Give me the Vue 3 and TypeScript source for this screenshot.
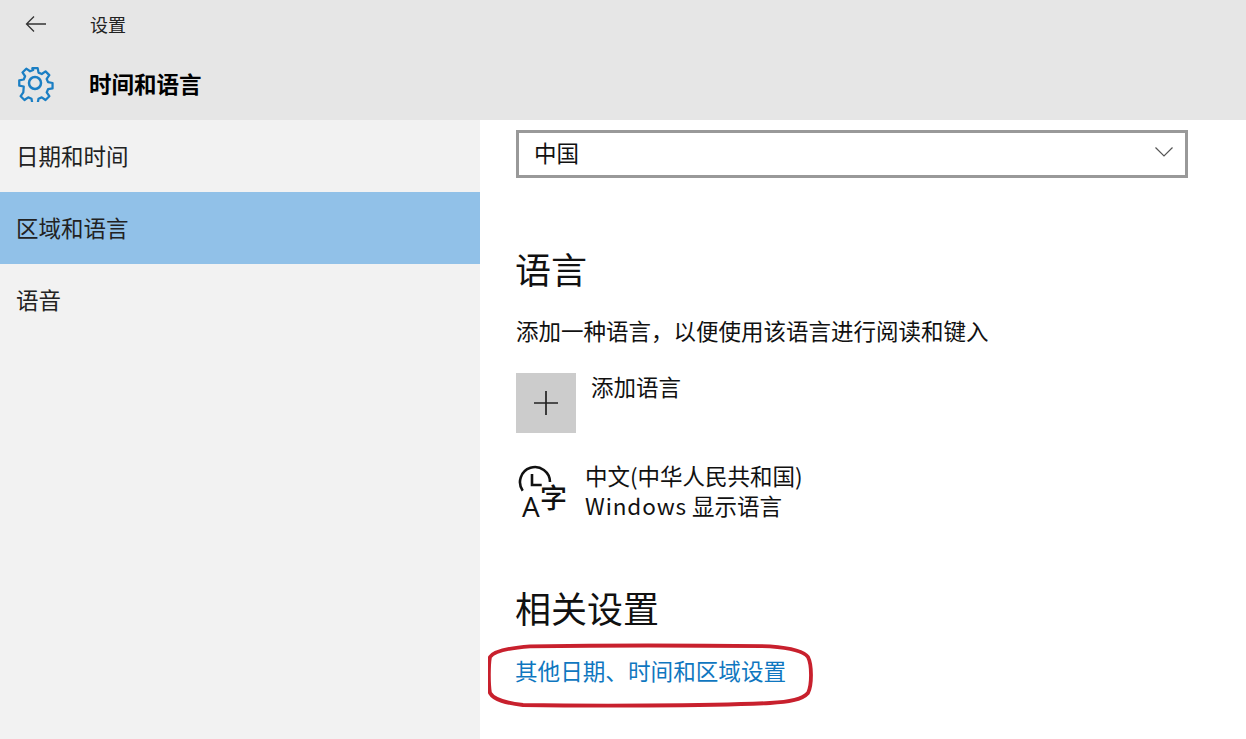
<script setup lang="ts">
const navItems: { label: string; active?: boolean }[] = [
  { label: '日期和时间' },
  { label: '区域和语言', active: true },
  { label: '语音' },
]
</script>

<template>
  <div class="app">
    <header class="header">
      <div class="top">
        <svg class="back" width="24" height="20" viewBox="0 0 24 20" fill="none" stroke="#333" stroke-width="1.3">
          <path d="M2.5 10H22M10 2.5L2.5 10L10 17.5" />
        </svg>
        <span class="top-title">设置</span>
      </div>
      <div class="title-row">
        <svg class="gear" width="38" height="38" viewBox="0 0 38 38" fill="none" stroke="#1b7fc4" stroke-width="2.5" stroke-linejoin="round">
          <path d="M16 2.5h6l.9 5 3.6 1.5 4.2-2.9 4.2 4.2-2.9 4.200 1.500 3.600 5 .9v6l-5 .9-1.500 3.600 2.900 4.200-4.200 4.200-4.200-2.900-3.600 1.500-.9 5h-6l-.9-5-3.600-1.500-4.200 2.900-4.200-4.200 2.900-4.200L6.500 22.900l-5-.9v-6l5-.9L8 11.500 5.100 7.300 9.300 3.100l4.200 2.900L17 4.500z" transform="translate(1.900 1.900) scale(.9)" />
          <circle cx="19" cy="19" r="6" />
        </svg>
        <h1 class="title">时间和语言</h1>
      </div>
    </header>
    <div class="body">
      <nav class="sidebar">
        <div v-for="item in navItems" :key="item.label" class="nav-item" :class="{ active: item.active }">{{ item.label }}</div>
      </nav>
      <main class="content">
        <div class="select">
          <span>中国</span>
          <svg width="20" height="12" viewBox="0 0 20 12" fill="none" stroke="#555" stroke-width="1.2">
            <path d="M1.500 1.500L10 10L18.500 1.500" />
          </svg>
        </div>
        <h2 class="section first">语言</h2>
        <p class="desc">添加一种语言，以便使用该语言进行阅读和键入</p>
        <div class="add-row">
          <div class="add-btn">
            <svg width="26" height="26" viewBox="0 0 26 26" stroke="#222" stroke-width="1.7">
              <path d="M13 1V25M1 13H25" />
            </svg>
          </div>
          <span class="add-label">添加语言</span>
        </div>
        <div class="lang-row">
          <svg class="lang-icon" width="52" height="52" viewBox="0 0 52 52" fill="none" stroke="#111" stroke-width="2.600">
            <path d="M6.700 25.700A15 15 0 1 1 34 17" />
            <path d="M16 9V20H25.700" />
          </svg>
          <span class="icon-a">A</span>
          <span class="icon-zi">字</span>
          <div class="lang-text">
            <div>中文(中华人民共和国)</div>
            <div><span class="latin">Windows</span> 显示语言</div>
          </div>
        </div>
        <h2 class="section second">相关设置</h2>
        <div class="link-wrap">
          <a class="link">其他日期、时间和区域设置</a>
          <svg class="circle" width="326" height="66" viewBox="0 0 326 66" fill="none" stroke="#c8202d" stroke-width="3.800">
            <path d="M2 14C6 8 20 5 42 3.300C100 2.500 220 2.500 282 3.300C304 5 316 8 320 14C324 22 324 42 320 50C314 57 300 59 282 60C220 63 100 63 35 62C18 60 6 57 2 50C.5 42 .5 22 2 14Z" />
          </svg>
        </div>
      </main>
    </div>
  </div>
</template>

<style>
html, body { margin: 0; background: #fff; }
</style>

<style scoped>
.app {
  width: 1246px;
  height: 739px;
  overflow: hidden;
  display: flex;
  flex-direction: column;
  font-family: "Noto Sans CJK SC", "Noto Sans", sans-serif;
  color: #111;
}
.header { height: 120px; background: #e6e6e6; flex: none; }
.top { height: 48px; display: flex; align-items: center; padding-left: 24px; }
.back { margin-top: -1px; }
.top-title { margin-left: 42px; font-size: 18px; line-height: 22px; color: #222; }
.title-row { height: 72px; display: flex; align-items: center; padding-left: 16px; margin-top: -1px; }
.title { margin: 0 0 0 35px; font-size: 22.500px; line-height: 32px; font-weight: 700; color: #000; }
.body { flex: 1; display: flex; min-height: 0; }
.sidebar { width: 480px; flex: none; background: #f2f2f2; }
.nav-item { box-sizing: border-box; height: 72px; display: flex; align-items: center; padding: 0 0 2px 16px; font-size: 22.500px; color: #222; }
.nav-item.active { background: #91c1e8; }
.content { flex: 1; padding: 10px 0 0 35px; }
.select {
  box-sizing: border-box;
  width: 672px;
  height: 48px;
  margin-left: 1px;
  border: 3px solid #999;
  display: flex;
  align-items: center;
  justify-content: space-between;
  padding: 0 11px 4px 15px;
  font-size: 22.500px;
}
.section { margin: 0; font-weight: 400; font-size: 36px; line-height: 48px; color: #111; }
.section.first { margin-top: 66px; }
.section.second { margin-top: 62px; }
.desc { margin: 22px 0 0 1px; font-size: 22.500px; line-height: 32px; }
.add-row { margin: 27px 0 0 1px; display: flex; align-items: flex-start; height: 60px; }
.add-btn { width: 60px; height: 60px; background: #ccc; display: flex; align-items: center; justify-content: center; }
.add-label { margin: -2px 0 0 15px; font-size: 22.500px; line-height: 30px; }
.lang-row { position: relative; margin-top: 29px; height: 60px; padding-left: 70px; }
.lang-icon { position: absolute; left: 1px; top: 4px; }
.icon-a { position: absolute; left: 7px; top: 30px; font-size: 28px; line-height: 30px; font-family: "Open Sans", sans-serif; }
.icon-zi { position: absolute; left: 25px; top: 21px; font-size: 27px; line-height: 30px; font-weight: 500; }
.lang-text { margin-top: -1px; font-size: 22.500px; line-height: 29.500px; }
.latin { letter-spacing: .9px; }
.link-wrap { position: relative; margin-top: 24px; }
.link { font-size: 22.600px; line-height: 32px; color: #0f77c0; display: block; }
.circle { position: absolute; left: -27px; top: -12px; }
</style>
